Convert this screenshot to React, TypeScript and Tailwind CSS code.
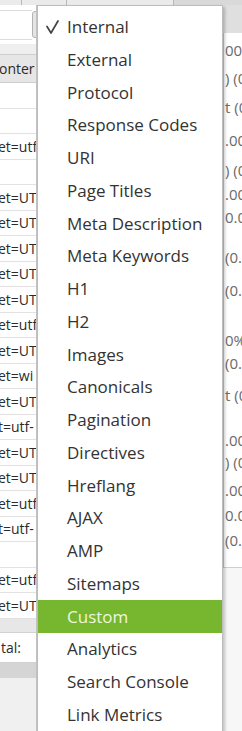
import { Fragment } from "react";

const MENU_ITEMS = [
  "Internal",
  "External",
  "Protocol",
  "Response Codes",
  "URI",
  "Page Titles",
  "Meta Description",
  "Meta Keywords",
  "H1",
  "H2",
  "Images",
  "Canonicals",
  "Pagination",
  "Directives",
  "Hreflang",
  "AJAX",
  "AMP",
  "Sitemaps",
  "Custom",
  "Analytics",
  "Search Console",
  "Link Metrics",
];

const CHECKED = "Internal";
const ACTIVE = "Custom";

// visible slice of the content type column
const ROWS = [
  "",
  "",
  "et=utf",
  "",
  "et=UT",
  "et=UT",
  "et=UT",
  "et=UT",
  "et=UT",
  "et=utf",
  "et=UT",
  "et=wi",
  "et=UT",
  "t=utf-",
  "et=UT",
  "et=UT",
  "et=utf",
  "t=utf-",
  "",
  "et=utf",
  "et=UT",
];

// right hand overview, cut off by the window
const OVERVIEW = [
  { text: "00%", mt: "mt-[7px]" },
  { text: ") (0", mt: "mt-[8px]" },
  { text: "t (0", mt: "mt-[9px]" },
  { text: ".00%", mt: "mt-[13px]" },
  { text: ") (0", mt: "mt-[10px]" },
  { text: ".00%", mt: "mt-[4px]" },
  { text: "0.00", mt: "mt-[3px]" },
  { text: "(0.0", mt: "mt-[20px]" },
  { text: "(0.0", mt: "mt-[13px]" },
  { text: "0%", mt: "mt-[30px]" },
  { text: "(0.0", mt: "mt-[3px]" },
  { text: "t (0", mt: "mt-[12px]" },
  { text: ".00%", mt: "mt-[25px]" },
  { text: ") (0", mt: "mt-[2px]" },
  { text: ".00%", mt: "mt-[8px]" },
  { text: "0.00", mt: "mt-[5px]" },
  { text: "(0.0", mt: "mt-[5px]" },
];

function Check() {
  return (
    <svg width="16" height="14" viewBox="0 0 16 14" className="ml-[5px]">
      <path
        d="M4 6.5 L8 13 L15 1"
        fill="none"
        stroke="#444"
        strokeWidth="1.7"
        strokeLinecap="round"
        strokeLinejoin="round"
      />
    </svg>
  );
}

export default function App() {
  return (
    <div className="relative h-[731px] w-[242px] overflow-hidden bg-[#f3f3f3] font-['Open_Sans',sans-serif]">
      {/* Tab strip */}
      <div className="flex h-[5px] bg-[#ebebeb]">
        <div className="w-[22px] border-r border-[#b8b8b8]" />
        <div className="w-[45px] border-r border-[#b8b8b8]" />
        <div className="w-[107px] border-r border-[#b8b8b8]" />
        <div className="flex-1 bg-[#d9d9d9]" />
      </div>

      <div className="flex h-[726px]">
        {/* Table column */}
        <div className="flex w-[37px] shrink-0 flex-col overflow-hidden border-r border-[#c4c4c4] text-[14px] text-[#2b2b2b]">
          <div className="flex h-[39px] shrink-0 items-center bg-white">
            <div className="h-[30px] flex-1 border-y border-[#dcdcdc] bg-white" />
            <div className="mr-[-6px] h-[27px] w-[10px] shrink-0 rounded-[3px] border border-[#b3b3b3] bg-[#e5e5e5]" />
          </div>
          <div className="h-[11px] shrink-0 border-b border-[#cfcfcf] bg-[#efefef]" />
          <div className="flex h-[28px] shrink-0 items-center border-b border-[#cdcdcd] bg-[#e6e6e6] whitespace-nowrap">
            <span className="ml-[-1px]">onter</span>
          </div>
          {ROWS.map((row, i) => (
            <div
              key={i}
              className="flex h-[25.5px] shrink-0 items-center border-b border-[#e2e2e2] bg-white whitespace-nowrap"
            >
              <span className="ml-[-2px]">{row}</span>
            </div>
          ))}
          <div className="h-[13px] shrink-0 bg-[#e7e7e7]" />
          <div className="flex h-[31px] shrink-0 items-center border-y border-[#d2d2d2] bg-white">
            <span className="ml-[1px]">tal:</span>
          </div>
          <div className="h-[15px] shrink-0 bg-[#d5d5d5]" />
          <div className="flex-1 bg-[#f0f0f0]" />
        </div>

        {/* Hidden under the menu */}
        <div className="flex-1 bg-white" />

        {/* Overview column */}
        <div className="flex w-[19px] shrink-0 flex-col overflow-hidden text-[15px] text-[#6a6a6a]">
          <div className="h-[28px] shrink-0 bg-[#dfdfdf]" />
          <div className="flex h-[534px] shrink-0 flex-col border-l border-[#c9c9c9] bg-white">
            {OVERVIEW.map((row, i) => (
              <div
                key={i}
                className={`${row.mt} h-[20px] shrink-0 whitespace-nowrap pl-[1px] leading-[20px]`}
              >
                {row.text}
              </div>
            ))}
          </div>
          <div className="flex-1 border-t border-[#cfcfcf] bg-[#f7f7f7]" />
        </div>
      </div>

      {/* Dropdown menu */}
      <div className="absolute left-[37px] top-[5px] bottom-[-10px] w-[186px] border border-[#bdbdbd] bg-white pt-[4.5px] shadow-[2px_2px_3px_rgba(0,0,0,0.22)]">
        {MENU_ITEMS.map((item) => {
          const isActive = item === ACTIVE;
          return (
            <Fragment key={item}>
              <div
                className={`flex h-[32.75px] items-center text-[17px] ${
                  isActive ? "bg-[#77b62f] text-[#eef7df]" : "text-[#333]"
                }`}
              >
                <div className="flex w-[29px] shrink-0 items-center">
                  {item === CHECKED && <Check />}
                </div>
                <span className="whitespace-nowrap">{item}</span>
              </div>
            </Fragment>
          );
        })}
      </div>
    </div>
  );
}
